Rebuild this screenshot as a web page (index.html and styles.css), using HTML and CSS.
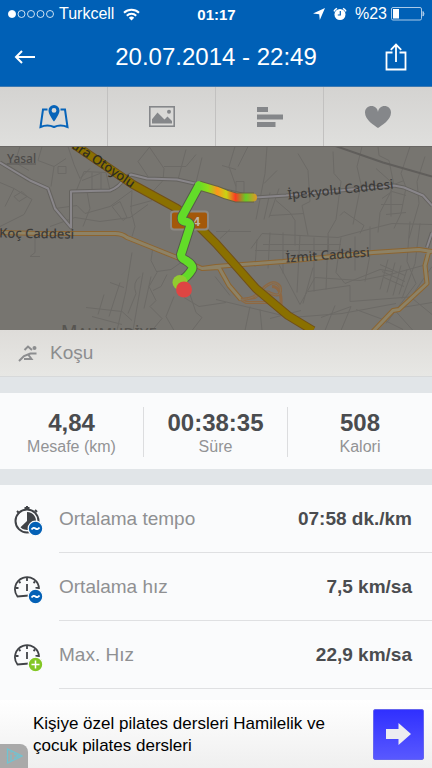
FILE: index.html
```
<!DOCTYPE html>
<html lang="tr">
<head>
  <meta charset="UTF-8">
  <meta name="viewport" content="width=device-width, initial-scale=1.0">
  <title>Koşu - 20.07.2014</title>
  <link rel="stylesheet" href="styles.css">
</head>
<body>
  <header class="header">
    <div class="status-bar">
      <div class="status-left">
        <svg class="signal" width="46" height="10" viewBox="0 0 46 10" fill="none" stroke="#fff" stroke-width=".8">
          <circle cx="4" cy="5" r="3.6" fill="#fff"/>
          <circle cx="13.5" cy="5" r="3.5"/>
          <circle cx="23" cy="5" r="3.5"/>
          <circle cx="32.500" cy="5" r="3.5"/>
          <circle cx="42" cy="5" r="3.5"/>
        </svg>
        <span>Turkcell</span>
        <svg class="wifi" width="17" height="13" viewBox="0 0 17 13" fill="none" stroke="#fff" stroke-width="2">
          <path d="M1 4.700a10.800 10.800 0 0 1 15 0"/>
          <path d="M3.800 7.700a6.700 6.700 0 0 1 9.400 0"/>
          <path d="M8.500 12.500L5.800 9.700a4 4 0 0 1 5.400 0z" fill="#fff" stroke="none"/>
        </svg>
      </div>
      <span class="clock">01:17</span>
      <div class="status-right">
        <svg width="12" height="12" viewBox="0 0 12 12" fill="#fff"><path d="M12 0L6.800 12 6.200 6.200 0 5.500z"/></svg>
        <svg width="14" height="14" viewBox="0 0 14 14">
          <circle cx="7" cy="7.500" r="5.500" fill="#fff"/>
          <path d="M1 4.300A7 7 0 0 1 4 1.400M10 1.400a7 7 0 0 1 3 2.900" fill="none" stroke="#fff" stroke-width="1.500"/>
          <path d="M7.300 4v4H4.800" fill="none" stroke="#0060b6" stroke-width="1.200"/>
        </svg>
        <span>%23</span>
        <svg width="34" height="14" viewBox="0 0 34 14">
          <rect x=".5" y=".5" width="30" height="12.500" rx="1.500" fill="none" stroke="#a9c9e8"/>
          <rect x="2" y="2" width="6" height="9.500" fill="#fff"/>
          <path d="M32 4.500q2 2.300 0 4.600z" fill="#a9c9e8" stroke="#a9c9e8"/>
        </svg>
      </div>
    </div>
    <div class="nav-bar">
      <button class="nav-button back" aria-label="Geri">
        <svg width="22" height="14" viewBox="0 0 22 14" fill="none" stroke="#fff" stroke-width="2"><path d="M8 1L2 7l6 6M2 7h19"/></svg>
      </button>
      <h1>20.07.2014 - 22:49</h1>
      <button class="nav-button share" aria-label="Paylaş">
        <svg width="22" height="28" viewBox="0 0 22 28" fill="none" stroke="#fff" stroke-width="1.800"><path d="M7.500 9.500H1.500V26.500h19V9.500h-6M11 19V2M5.800 6.800L11 1.600l5.200 5.200"/></svg>
      </button>
    </div>
  </header>

  <nav class="tabs">
    <button class="tab active" aria-label="Harita">
      <svg width="30" height="26" viewBox="0 0 30 26">
        <path d="M8.500 5.500H4L1.500 23q7-3 13.500 0 6.500-3 13.500 0L26 5.500h-4.500" fill="none" stroke="currentColor" stroke-width="2"/>
        <path fill-rule="evenodd" d="M15 1a5.500 5.500 0 0 0-5.500 5.700C9.500 10.500 15 17.500 15 17.500s5.500-7 5.500-10.800A5.500 5.500 0 0 0 15 1zm0 3a2.400 2.400 0 1 1 0 4.800A2.400 2.400 0 0 1 15 4z" fill="currentColor"/>
      </svg>
    </button>
    <button class="tab" aria-label="Fotoğraflar">
      <svg width="26" height="21" viewBox="0 0 26 21">
        <rect x=".8" y=".8" width="24.400" height="19.400" fill="none" stroke="currentColor" stroke-width="1.600"/>
        <path d="M3 17.500v-4.200L8.500 6.500l7 7 3-3 4.500 4.500v2.500z" fill="currentColor"/>
        <circle cx="20" cy="5.800" r="2" fill="currentColor"/>
      </svg>
    </button>
    <button class="tab" aria-label="Turlar">
      <svg width="26" height="20" viewBox="0 0 26 20" fill="currentColor"><path d="M0 0h11v5H0zM0 7.500h26v5H0zM0 15h18.500v5H0z"/></svg>
    </button>
    <button class="tab" aria-label="Nabız">
      <svg width="26" height="22" viewBox="0 0 26 22" fill="currentColor"><path d="M13 22C9.500 19.500 0 14 0 6.500 0 2.500 3 0 6.500 0 10 0 12.500 2.500 13 6c.5-3.500 3-6 6.500-6C23 0 26 2.500 26 6.500 26 14 16.500 19.500 13 22z"/></svg>
    </button>
  </nav>

  <main>
    <div class="map">
      <svg viewBox="0 0 432 184" preserveAspectRatio="xMidYMid slice" fill="none" stroke-linejoin="round">
        <defs>
          <linearGradient id="pace" gradientUnits="userSpaceOnUse" x1="199" y1="0" x2="256" y2="0">
            <stop offset="0" stop-color="#65dc28"/>
            <stop offset=".16" stop-color="#8fdd18"/>
            <stop offset=".32" stop-color="#ff941c"/>
            <stop offset=".48" stop-color="#c7d414"/>
            <stop offset=".64" stop-color="#fb3b23"/>
            <stop offset=".82" stop-color="#66cc27"/>
            <stop offset="1" stop-color="#d99a27"/>
          </linearGradient>
        </defs>

        <!-- side streets -->
        <g stroke="#6c6a66">
          <path d="M0 36l14 6 18 11-8 15-24 12M14 42l-9 18M14 50l8-5 5 5-8 5zM20 0l-5 16-12 2M15 16l14 8M42 0l-4 14 16 6 12-8M54 20l-3 20M68 0l6 18 6 14 10-10M58 20h8v7h-8zM76 45l8-20 22 1 4 18M82 34l18-7M92 26v18M101 26v18M55 62l22-3 8 8 25-7 22-16M50 80l25-9 25 4 30-4 18-13M112 60l8-5 7 16-4 3zM87 45l3 17-7 18M132 44l-1 20 4 16-3 10M148 30l-10-15 12-15M150 48l13-14 1-12-15-22M164 20h22l10-12M178 33l8-30M196 36l6-25M35 88v18l-5 4h10M152 54l-22 6"/>
          <path d="M153 100l-2 14 6 12-8 14 7 14-6 6 12 12-10 12M157 125l14-2 10-7M132 106l-6 38-9 40M143 126l-10 58M151 130l-7 32M120 136l-11 34M110 136l14 5M104 148l-6 20M86 161l36 4 10 9M140 130q-8 6-4 17l-8 20M92 170l30 8M167 128l-6 12-8 4M174 150l-8 20 8 14M190 148l6 18 6 5-10 13M184 151l15 9 27-4M215 130l15 19"/>
          <path d="M235 0l-6 20 7 20M248 0l-10 20M267 0l-2 27-9 46M222 19l14 4M236 35h8v12h-8zM264 37l13-13M270 46l-6 27M279 42l-10 29M298 7l10 17 2 31-8 4 6 30M333 5l1 22 7 8-5 38-8 14 1 22M362 0l-5 20 4 18-8 40M378 0l1 9 10 5 5 25-14 27-2 20M410 0l-9 27 5 14-5 26-7 15M425 10l-8 25 2 22-10 35M276 54l14 12 5 8v25M270 69l34-2M340 69l4-4 20 14-4 8M216 85h35M220 92l10-9M251 102l11-15 76 4 26-7 28-7 40 1M257 93l-2 27M270 86l-2 36M283 86v41M300 89l-3 57M314 91v54M328 92l-2 51M341 91l-5 35 9 11 35-14 12 2M255 104h109M263 98h78M279 118l21 40 15-27 45 3 30-6 33-9M216 153l75 18 51-4 54-10M303 157l10-36M355 90v34M370 80v28l-5 27M308 145l42-6v16l66-5M321 171l30-11-10 24M325 184l10-25M356 163l27 10 20 10M250 160l-5 24M260 163l2 21M270 172l31-8"/>
          <path d="M376 22l18 16 10-4M382 52l10-7 14 4M381 58h22M386 68l20-2M391 42v28M380 118l25 11M382 125l23 10M384 131l20 9M388 113l-8 30M395 116l-8 30M401 119l-8 30M407 123l-8 25M410 75l-3 40 9 22-30 40M420 77l-5 40-13 35M432 120l-22 32M410 150l22 18M395 164l18 20M402 161l30-5"/>
        </g>

        <!-- railway -->
        <path d="M334-1l49 17 49 14" stroke="#605e5b" stroke-width="2"/>

        <!-- grey streets -->
        <path d="M0 16l30 18 18 8 7 20 16 19V45l39-1q9-3 15-13l6-3 16 4 30 1 22 5 56 13 31-2M286 49l108-10 10 2 19 8 9 10M427 101l5-15" stroke="#65635f" stroke-width="4"/>
        <path d="M0 16l30 18 18 8 7 20 16 19V45l39-1q9-3 15-13l6-3 16 4 30 1 22 5 56 13 31-2M286 49l108-10 10 2 19 8 9 10M427 101l5-15" stroke="#89868a" stroke-width="2"/>

        <!-- avenues -->
        <path d="M0 86l40 1h75q7 0 12 4l50 20 25 11 14-2 67-5 90-9 46-3 13 2M202 122l17-1 10 18 12 14M429 104l-4 15 2 18-28 26-6 1-20 21" stroke="#8d6530" stroke-width="5"/>
        <path d="M0 86l40 1h75q7 0 12 4l50 20 25 11 14-2 67-5 90-9 46-3 13 2M202 122l17-1 10 18 12 14M429 104l-4 15 2 18-28 26-6 1-20 21" stroke="#8d8266" stroke-width="3"/>
        <path d="M241 153l5 3h24l10 2M241 153q14 0 21-10 12-12 18-3 3 12-9 7-6-5-16 4l-14 2M272 140q10 0 9 19" stroke="#8d6844" stroke-width="3"/>
        <path d="M241 153l5 3h24M241 153q14 0 21-10 12-12 18-3 3 12-9 7-6-5-16 4" stroke="#84745c"/>

        <!-- motorway -->
        <path d="M74-2l59 40 44 24 23 19 16 16 17 19 23 26 32 27 25 15" stroke="#715018" stroke-width="9"/>
        <path d="M74-2l59 40 44 24 23 19 16 16 17 19 23 26 32 27 25 15" stroke="#8a7000" stroke-width="7"/>

        <g class="map-labels" stroke="none">
          <text class="place" x="7" y="16">Yasal</text>
          <path d="M7 17h29v1H7z"/>
          <text x="-1" y="91" transform="rotate(1 0 91)">Koç Caddesi</text>
          <text x="288" y="53" transform="rotate(-6 288 53)">İpekyolu Caddesi</text>
          <text x="286" y="116" transform="rotate(-4 286 116)">İzmit Caddesi</text>
          <text class="motorway-name" x="71" y="1" transform="rotate(34 71 1)">ara Otoyolu</text>
          <text class="district" x="61" y="191"><tspan class="initial">M</tspan>AHMUDİYE</text>
        </g>

        <rect x="171" y="65" width="37" height="18" rx="3" fill="#a45809" stroke="#8d8983" stroke-width="2"/>
        <text class="road-number" x="193" y="79">4</text>

        <!-- recorded route -->
        <path d="M199 39l-17 31q-1 4 3 5 6 1 5 5l-9 28q0 4 5 6 8 5 6 9-4 7-12 12" stroke="#555b49" stroke-width="10"/>
        <path d="M199 39l17 5 10 4 10 3h18" stroke="#666343" stroke-width="10"/>
        <path d="M199 39l-17 31q-1 4 3 5 6 1 5 5l-9 28q0 4 5 6 8 5 6 9-4 7-12 12" stroke="#62dc28" stroke-width="8" stroke-linecap="round"/>
        <path d="M199 39l17 5 10 4 10 3h17" stroke="url(#pace)" stroke-width="8" stroke-linecap="round"/>
        <circle cx="180" cy="136" r="7.500" fill="#91cc30"/>
        <circle cx="184" cy="143" r="8" fill="#de4543"/>
      </svg>
    </div>

    <div class="sport">
      <svg width="20" height="18" viewBox="0 0 20 18" fill="none" stroke="#8c8d8f" stroke-width="2">
        <path d="M1 17l5-5 6.500-2.500M6 15l7.500 0-3-4M11.500 9.500h7M6.500 6L10 2.500l4 3.500"/>
        <circle cx="16.500" cy="4" r="2" fill="#8c8d8f" stroke="none"/>
      </svg>
      <span>Koşu</span>
    </div>

    <section class="summary">
      <div class="stat"><strong>4,84</strong><span>Mesafe (km)</span></div>
      <div class="stat"><strong>00:38:35</strong><span>Süre</span></div>
      <div class="stat"><strong>508</strong><span>Kalori</span></div>
    </section>

    <ul class="details">
      <li>
        <svg width="30" height="30" viewBox="0 0 30 30" fill="none" stroke="#404347" stroke-width="2">
          <circle cx="13" cy="15" r="11.500"/>
          <path d="M13 15V6a9 9 0 1 1-6.500 15.200z" fill="#404347" stroke="none"/>
          <path d="M10.500 2h5M13 0v4M3 5l2.500 2.500M21 4l2 2"/>
          <circle cx="21.500" cy="22.500" r="7.300" fill="#0461b6" stroke="#fafbfc" stroke-width="1.200"/>
          <path d="M17.500 23.500q2-2.700 4-1t4-1" stroke="#fff" stroke-width="1.800"/>
        </svg>
        <span class="label">Ortalama tempo</span>
        <span class="value">07:58 dk./km</span>
      </li>
      <li>
        <svg width="30" height="30" viewBox="0 0 30 30" fill="none" stroke="#404347" stroke-width="1.800">
          <path d="M25 15A12 12 0 1 0 3.500 22.500L15 21.500"/>
          <path d="M13 4v3M13 10v7M2 14h2.500M5 7.500l1.500 1.500M21 7.500L19.500 9M24 14h-2.500"/>
          <circle cx="21.500" cy="22.500" r="7.300" fill="#0461b6" stroke="#fafbfc" stroke-width="1.200"/>
          <path d="M17.500 23.500q2-2.700 4-1t4-1" stroke="#fff" stroke-width="1.800"/>
        </svg>
        <span class="label">Ortalama hız</span>
        <span class="value">7,5 km/sa</span>
      </li>
      <li>
        <svg width="30" height="30" viewBox="0 0 30 30" fill="none" stroke="#404347" stroke-width="1.800">
          <path d="M25 15A12 12 0 1 0 3.500 22.500L15 21.500"/>
          <path d="M13 4v3M13 10v7M2 14h2.500M5 7.500l1.500 1.500M21 7.500L19.500 9M24 14h-2.500"/>
          <circle cx="21.500" cy="22.500" r="7.300" fill="#83c725" stroke="#fafbfc" stroke-width="1.200"/>
          <path d="M17.500 22.500h8M21.500 18.500v8" stroke="#fff" stroke-width="1.500"/>
        </svg>
        <span class="label">Max. Hız</span>
        <span class="value">22,9 km/sa</span>
      </li>
    </ul>
  </main>

  <a class="ad" href="#">
    <span class="ad-text">Kişiye özel pilates dersleri Hamilelik ve çocuk pilates dersleri</span>
    <span class="ad-arrow">
      <svg width="25" height="22" viewBox="0 0 25 22" fill="#ededf1"><path d="M0 6h12.500V0L25 11 12.500 22v-6H0z"/></svg>
    </span>
    <span class="ad-mark">
      <svg width="18" height="16" viewBox="0 0 18 16" fill="none" stroke="#6fc4d2" stroke-width="1.300"><path d="M1.500 1v14L16 8zM5 6.500v6M5 3.500v1.300M8 6l4.500 2L8 10"/></svg>
    </span>
  </a>
</body>
</html>
```
FILE: styles.css
```
* {
  box-sizing: border-box;
}

body {
  margin: 0;
  min-height: 100vh;
  display: flex;
  flex-direction: column;
  font-family: "Liberation Sans", Arial, sans-serif;
  background: #fafbfc;
  color: #4a4c4f;
}

svg {
  display: block;
  flex: none;
}

button {
  padding: 0;
  border: 0;
  background: none;
  cursor: pointer;
}

/* Header */
.header {
  height: 87px;
  background: #0060b6;
  border-bottom: 1px solid #3c79b2;
  color: #fff;
}

.status-bar {
  display: grid;
  grid-template-columns: 1fr auto 1fr;
  align-items: center;
  height: 28px;
  padding: 0 7px 0 8px;
  font-size: 16px;
}

.status-left,
.status-right {
  display: flex;
  align-items: center;
  gap: 5px;
}

.status-left .wifi {
  margin-left: 4px;
}

.status-right {
  justify-content: flex-end;
  gap: 8px;
}

.status-right span {
  margin-right: -4px;
}

.clock {
  font-size: 15px;
  font-weight: bold;
}

.nav-bar {
  display: flex;
  align-items: center;
  justify-content: space-between;
  height: 58px;
  padding: 0 25px 0 14px;
}

.nav-button {
  display: flex;
  align-items: center;
  width: 32px;
  height: 44px;
}

.nav-button.back {
  width: 43px;
}

.nav-button.share {
  justify-content: flex-end;
}

.nav-bar h1 {
  margin: 0;
  font-size: 24px;
  font-weight: normal;
}

/* Tabs */
.tabs {
  display: grid;
  grid-template-columns: repeat(4, 1fr);
  height: 59px;
  background: linear-gradient(#d4d3d1, #dfdfdd);
}

.tab {
  display: flex;
  align-items: center;
  justify-content: center;
  border-right: 1px solid #c2c1c0;
  color: #85878a;
}

.tab:last-child {
  border-right: 0;
}

.tab.active {
  color: #0764b9;
}

/* Map */
.map svg {
  width: 100%;
  height: 184px;
  background: #777570;
  border-top: 1px solid #6a6764;
}

.map-labels {
  fill: #3c3b3a;
  font-family: "Noto Sans", sans-serif;
  font-size: 13px;
  font-weight: 500;
}

.map-labels .place {
  fill: #4d4b49;
  font-size: 12px;
}

.map-labels path {
  fill: #5b5957;
}

.map-labels .motorway-name {
  fill: #302d20;
}

.map-labels .district {
  fill: #575551;
  font-size: 15px;
}

.map-labels .initial {
  font-size: 18px;
}

.road-number {
  fill: #c0b5a5;
  font-size: 13px;
  font-weight: bold;
}

/* Sport type */
.sport {
  display: flex;
  align-items: center;
  gap: 12px;
  height: 47px;
  padding-left: 18px;
  background: linear-gradient(#dedcd9, #e7e7e4);
  border-bottom: 1px solid #d7d9da;
  color: #8c8d8f;
  font-size: 19px;
}

/* Summary */
.summary {
  display: grid;
  grid-template-columns: repeat(3, 1fr);
  height: 108px;
  padding: 14px 0;
  background: #fafbfc;
  border: solid #e1e5e8;
  border-width: 16px 0;
}

.stat {
  display: flex;
  flex-direction: column;
  align-items: center;
  border-right: 1px solid #dcdddf;
  font-size: 16px;
  line-height: 20px;
  color: #929395;
}

.stat:last-child {
  border-right: 0;
}

.stat strong {
  margin-top: 2px;
  font-size: 24px;
  line-height: 28px;
  color: #4a4c4f;
}

/* Details */
.details {
  margin: 0;
  padding: 0;
  list-style: none;
}

.details li {
  display: flex;
  align-items: center;
  height: 68px;
  margin-left: 59px;
  padding-right: 20px;
  border-bottom: 1px solid #dfe0e2;
  font-size: 19px;
}

.details svg {
  margin: 4px 15px 0 -45px;
}

.label {
  flex: 1;
  color: #8f9092;
}

.value {
  font-weight: bold;
}

/* Ad banner */
.ad {
  position: relative;
  display: flex;
  align-items: center;
  justify-content: space-between;
  gap: 20px;
  height: 68px;
  margin-top: auto;
  padding: 0 8px 0 33px;
  background: linear-gradient(#fff, #efefef);
  color: #000;
  text-decoration: none;
}

.ad-text {
  max-width: 310px;
  padding-top: 2px;
  font-size: 17px;
  line-height: 22px;
}

.ad-arrow {
  display: flex;
  align-items: center;
  justify-content: center;
  width: 51px;
  height: 51px;
  flex: none;
  border: 1px solid #6666ef;
  border-radius: 2px;
  background: linear-gradient(#3030ff, #5858ff);
}

.ad-mark {
  position: absolute;
  left: 0;
  bottom: 0;
  padding: 4px 4px 4px 6px;
  border-top-right-radius: 8px;
  background: #a9a9a9;
}
```
